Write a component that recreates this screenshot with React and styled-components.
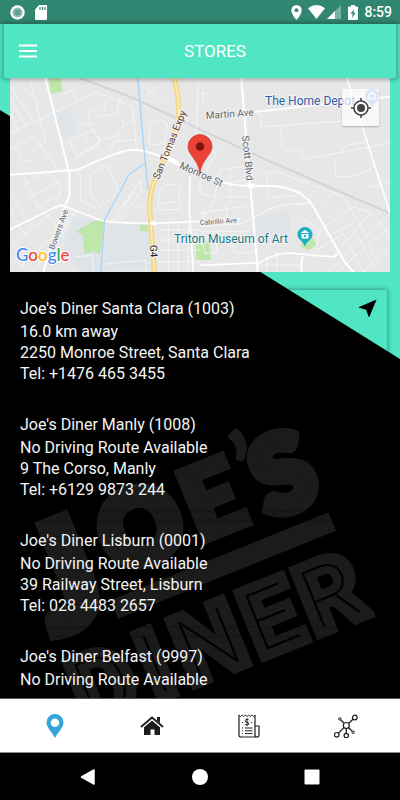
import React from 'react';
import styled, { createGlobalStyle } from 'styled-components';

const stores = [
  {
    name: "Joe's Diner Santa Clara (1003)",
    lines: ['16.0 km away', '2250 Monroe Street, Santa Clara', 'Tel: +1476 465 3455'],
    hasRoute: true,
  },
  {
    name: "Joe's Diner Manly (1008)",
    lines: ['No Driving Route Available', '9 The Corso, Manly', 'Tel: +6129 9873 244'],
  },
  {
    name: "Joe's Diner Lisburn (0001)",
    lines: ['No Driving Route Available', '39 Railway Street, Lisburn', 'Tel: 028 4483 2657'],
  },
  {
    name: "Joe's Diner Belfast (9997)",
    lines: ['No Driving Route Available'],
  },
];

export default function App() {
  return (
    <>
      <GlobalStyle />
      <PageSC>
        <Backdrop />
        <StatusBar />
        <HeaderSC>
          <MenuButtonSC type="button" aria-label="Menu">
            <svg width="20" height="14" viewBox="0 0 20 14">
              <path d="M1 1.500h18M1 7h18M1 12.500h18" stroke="#fff" strokeWidth="2" />
            </svg>
          </MenuButtonSC>
          <TitleSC>STORES</TitleSC>
        </HeaderSC>
        <MapSC>
          <StreetMap />
          <LocateButtonSC type="button" aria-label="My location">
            <svg width="22" height="22" viewBox="0 0 22 22">
              <circle cx="11" cy="11" r="7" fill="none" stroke="#444" strokeWidth="1.6" />
              <circle cx="11" cy="11" r="4" fill="#444" />
              <path d="M11 1v3M11 18v3M1 11h3M18 11h3" stroke="#444" strokeWidth="1.6" />
            </svg>
          </LocateButtonSC>
        </MapSC>
        <StoreListSC>
          {stores.map((store) => (
            <StoreCardSC key={store.name}>
              <div>
                <StoreNameSC>{store.name}</StoreNameSC>
                {store.lines.map((line) => (
                  <StoreLineSC key={line}>{line}</StoreLineSC>
                ))}
              </div>
              {store.hasRoute && (
                <RouteButtonSC type="button" aria-label="Directions">
                  <svg width="18" height="18" viewBox="0 0 18 18">
                    <path d="M17.600 .4L0 8v.7l7.200 2.100L9.600 17.800h.8z" fill="#000" />
                  </svg>
                </RouteButtonSC>
              )}
            </StoreCardSC>
          ))}
        </StoreListSC>
        <TabBar />
        <SystemNav />
      </PageSC>
    </>
  );
}

const dinerLetters = [
  { letter: 'D', x: 30 },
  { letter: 'I', x: 86 },
  { letter: 'N', x: 144 },
  { letter: 'E', x: 211 },
  { letter: 'R', x: 275 },
];

function Backdrop() {
  return (
    <BackdropSC viewBox="0 0 400 800" preserveAspectRatio="xMidYMin slice" aria-hidden="true">
      <path d="M0 0H400V359L0 110z" fill="#50e5c3" />
      <g fill="#1b1b1b" stroke="#1b1b1b" textAnchor="middle">
        <g transform="translate(118 608) rotate(-22)" fontFamily="Lato, sans-serif" fontWeight="900">
          <text x="-38" y="1" fontSize="144" strokeWidth="14">J</text>
          <text x="51" y="-31" fontSize="100" strokeWidth="12">O</text>
          <text x="128" y="-30" fontSize="100" strokeWidth="8">E</text>
          <text x="173" y="-45" fontSize="100" strokeWidth="1">’</text>
          <text x="203" y="-26" fontSize="104" strokeWidth="12">S</text>
          <rect x="-4" y="-10" width="235" height="20" stroke="none" />
        </g>
        <g transform="translate(90 733) rotate(-22)" fontFamily="Roboto, sans-serif">
          {dinerLetters.map(({ letter, x }) => (
            <text key={letter} x={x} y="-5" fontSize="98" fontWeight="700" strokeWidth="9">
              {letter}
            </text>
          ))}
          <g fill="#000" stroke="#000" strokeWidth="0">
            {dinerLetters.map(({ letter, x }) => (
              <text key={letter} x={x} y="-11" fontSize="82" fontWeight="100">
                {letter}
              </text>
            ))}
          </g>
        </g>
      </g>
    </BackdropSC>
  );
}

function StatusBar() {
  return (
    <StatusBarSC>
      <StatusGroupSC>
        <svg width="15" height="15" viewBox="0 0 15 15">
          <circle cx="7.500" cy="7.500" r="7.200" fill="#fff" />
          <circle cx="7.500" cy="7.500" r="5" fill="#8fbcb0" />
          <circle cx="7.500" cy="7.500" r="3" fill="#5f9f8f" />
        </svg>
        <svg width="12" height="15" viewBox="0 0 12 15">
          <path d="M4.200 0H11q1 0 1 1v13q0 1-1 1H1q-1 0-1-1V4.500z" fill="#fff" />
          <path d="M5 2v3M7.500 2v3M10 2v3" stroke="#318671" strokeWidth="1.2" />
        </svg>
      </StatusGroupSC>
      <StatusGroupSC $tight>
        <svg width="11" height="15" viewBox="0 0 11 15">
          <path d="M5.500 0A5.200 5.200 0 0 0 .3 5.200C.3 9.200 5.500 15 5.500 15s5.200-5.800 5.200-9.800A5.200 5.200 0 0 0 5.500 0z" fill="#fff" />
          <circle cx="5.500" cy="5.200" r="1.900" fill="#318671" />
        </svg>
        <svg width="34" height="14" viewBox="0 0 34 14">
          <path d="M0 3.200Q8.500-3 17 3.200L8.500 14z" fill="#fff" />
          <path d="M33 0V14H19z" fill="#79b0a2" />
          <path d="M27 6V14H19z" fill="#fff" />
        </svg>
        <svg width="10" height="15" viewBox="0 0 10 15">
          <path d="M3 0h4v1.500h2q1 0 1 1V14q0 1-1 1H1q-1 0-1-1V2.500q0-1 1-1h2z" fill="#fff" />
          <path d="M6.200 4L2.500 8.800h2.200L4 13l3.600-5.200H5.400z" fill="#318671" />
        </svg>
        <ClockSC>8:59</ClockSC>
      </StatusGroupSC>
    </StatusBarSC>
  );
}

function StreetMap() {
  return (
    <MapDrawingSC viewBox="10 8 380 194" preserveAspectRatio="xMidYMid slice">
      <rect x="10" y="8" width="380" height="194" fill="#e7e7e7" />
      <g transform="scale(.33333)" fill="none" strokeLinejoin="round" strokeLinecap="round">
        <g fill="#dfe4e8">
          <path d="M165 130l50-14 8 74-36 16z" />
          <path d="M218 440l96 10-6 156h-68l-52-60z" />
          <path d="M322 460l122 10 14 130H300z" />
          <path d="M764 440l106-16v76l-100 14z" />
        </g>
        <g fill="#bfe7aa">
          <path d="M146 24h34l8 40-36 8z" />
          <path d="M228 484l50-30 36-4-14 104-20-10-26 8-6-56z" />
          <path d="M418 464l26 2v20l-24-4z" />
          <path d="M588 524l40-8 6 54h-46z" />
          <path d="M908 505l28-5 14 24-22 16-26-8z" />
        </g>
        <path d="M240 24L400 84L600 178L800 270L1170 430" stroke="#d2d5d8" strokeWidth="6" />
        <g stroke="#f7f7f7" strokeWidth="2.500">
          <path d="M30 50L100 155M30 88L80 170M30 130L56 184M60 40L130 110M90 24L138 216L84 248M30 190L290 67L398 110L410 245M180 80L214 60L232 96M30 240L98 200L130 240L176 300M48 230L66 276L100 272" />
          <path d="M186 222L280 178L300 214L232 264L210 214M250 190L272 236M228 256L290 230M270 115l30 25l50-10l22 30l-20 40l-50 10l-34-40zM285 100l20 30M320 90l-8 35M350 125l10-40M375 160l25-5M350 195l8 20M300 210l-10 22M250 160l30 5" />
          <path d="M272 312L320 282L358 366L300 412L272 370zM240 300L242 390L296 420M330 460L420 334L424 366L356 456M350 450L410 345M365 400l20 12M400 370l20 10M398 408l25 4" />
          <path d="M66 350L124 308M84 382L180 334M106 412L176 380M66 306L110 400L180 480M140 302L180 345L178 380M30 370L98 468M30 420L80 500M30 530L180 408M60 590L180 480M100 606L220 430M184 500L225 425M30 560l60 46M330 240L345 215L408 210M320 582L438 570V606M228 560L276 556L282 606" />
          <path d="M440 80L450 60L490 40M430 50l30 20M470 90l20 10M450 160q40-20 52 0l-6 60l-46 4zM480 360q4-20 60-18M480 360l-6 60l66-2M538 350v70M480 400l50-4M480 480H600M480 510H600M480 540H600M476 575H600M505 450V606M535 455V606M565 455V606M596 24L588 200L650 250" />
          <path d="M600 70h30M610 50v50M780 130L784 170L1140 146M840 170L848 230L860 242H904L908 268L1170 220M1002 264L1008 318Q1070 330 1120 290M1028 250q-4-30 80-34M800 304L804 384L886 376M1100 355L1170 334M780 310L830 305L1030 380L1110 520L1130 580M740 340L820 350L904 365M940 360Q930 400 900 410M990 375l-14 26" />
          <path d="M600 484H740M606 520l10 30L650 546V500M700 500v48h60M770 560V606M800 555V606M830 550V606M770 585H900M960 480L940 560M990 600L1170 430M960 480L1060 410L1120 430L1170 500M1010 606L1170 470M1090 606L1170 530M980 500L1060 460M1000 560L1110 430M1030 490L1090 606M1060 470L1120 590M950 540L1030 490M900 440l60 40" />
          <path d="M600 430L660 420L736 410M600 460L640 400L660 300L730 290M670 340L740 330M660 380h80M690 290v110M620 300l40-70M600 330v40l40 10M610 410v40M680 400v50M600 470L720 462" />
          <path d="M720 462Q770 440 804 420T930 400" strokeWidth="4" />
        </g>
        <g stroke="#fff" strokeWidth="6">
          <path d="M136 24L208 310V378L194 412L155 520L130 606M30 314L230 300Q300 268 350 250T440 245Q490 260 520 276L600 316Q690 350 750 348H830Q910 360 940 410L1030 570L1060 606" />
          <path d="M30 478L182 404L300 450Q340 460 460 460L600 454Q680 452 720 446M570 320L568 420L580 606M600 586L780 578Q830 545 880 550T1000 560L1020 548M1040 24L1170 430" strokeWidth="5" />
          <path d="M724 24L750 340L774 606M760 126L1170 80M908 560Q900 590 906 606" />
        </g>
        <path d="M413 24L436 280L388 312L314 450L302 606M436 280L444 360" stroke="#a5d5fa" strokeWidth="4" />
        <path d="M523 24Q545 120 530 180L470 320Q442 370 452 450L463 606" stroke="#f3d98c" strokeWidth="16" strokeLinecap="butt" />
        <path d="M523 24Q545 120 530 180L470 320Q442 370 452 450L463 606" stroke="#fbeebb" strokeWidth="4" strokeLinecap="butt" />
        <path d="M505 266l26 12M456 460h8M746 348h12" stroke="#fff" strokeWidth="12" />
      </g>
      <g fontFamily="Roboto, sans-serif" stroke="#f3f3f3" strokeWidth="2" paintOrder="stroke" fill="#5c666e">
        <text x="206" y="49" fontSize="10" transform="rotate(-4 206 49)">Martin Ave</text>
        <text x="242" y="66" fontSize="10" transform="rotate(84 242 66)">Scott Blvd</text>
        <text x="179" y="98" fontSize="10" transform="rotate(24 179 98)">Monroe St</text>
        <text x="200" y="155" fontSize="7" transform="rotate(-4 200 155)">Cabrillo Ave</text>
        <text x="54" y="180" fontSize="8" transform="rotate(-70 54 180)">Bowers Ave</text>
        <text x="159" y="110" fontSize="10" fill="#5a3a22" transform="rotate(-68 159 110)">San Tomas Expy</text>
        <text x="150" y="175" fontSize="10" fill="#222" transform="rotate(88 150 175)">G4</text>
        <text x="265" y="35" fontSize="12" fill="#2d5fa8">The Home Depot</text>
        <text x="174" y="173" fontSize="12" fill="#147a86">Triton Museum of Art</text>
      </g>
      <path d="M372 19a7 7 0 0 0-7 7c0 5 5 6 7 12c2-6 7-7 7-12a7 7 0 0 0-7-7z" fill="#7fa9ee" />
      <path d="M369 24h6v5h-6zM370 24q2-5 4 0" fill="none" stroke="#fff" strokeWidth="1.2" />
      <path d="M305 157a7.500 7.500 0 0 0-7.500 7.500c0 5 5.500 6 7.500 12c2-6 7.500-7 7.500-12a7.500 7.500 0 0 0-7.500-7.500z" fill="#1faebf" />
      <path d="M300.500 163l4.500-3l4.500 3zM301.500 164h7v4.500h-7z" fill="#fff" />
      <path d="M304 165h2v2h-2z" fill="#1faebf" />
      <path d="M200 64.500a12 12 0 0 0-12 12c0 9 10 12 12 27c2-15 12-18 12-27a12 12 0 0 0-12-12z" fill="#ea4335" stroke="#c5322a" strokeWidth=".6" />
      <circle cx="200" cy="76.500" r="4.200" fill="#811411" />
      <text x="16" y="191" fontFamily="Lato, sans-serif" fontSize="17" fontWeight="500" stroke="#fff" strokeWidth="2" paintOrder="stroke">
        <tspan fill="#4285f4">G</tspan>
        <tspan fill="#ea4335">o</tspan>
        <tspan fill="#fbbc05">o</tspan>
        <tspan fill="#4285f4">g</tspan>
        <tspan fill="#34a853">l</tspan>
        <tspan fill="#ea4335">e</tspan>
      </text>
    </MapDrawingSC>
  );
}

function TabBar() {
  return (
    <TabBarSC>
      <TabSC href="#stores" aria-label="Stores">
        <svg width="24" height="24" viewBox="0 0 24 24">
          <path fillRule="evenodd" d="M12 0a8.500 8.500 0 0 0-8.500 8.500C3.500 14 9.500 18.500 12 24c2.500-5.500 8.500-10 8.500-15.500A8.500 8.500 0 0 0 12 0zm0 4.400a4.300 4.300 0 1 1 0 8.600a4.300 4.300 0 0 1 0-8.600z" fill="#34a5dc" />
        </svg>
      </TabSC>
      <TabSC href="#home" aria-label="Home">
        <svg width="24" height="24" viewBox="0 0 24 24">
          <path d="M12 6.500l8 6.800V21h-5.500v-5.500h-4V21H4v-7.700z" fill="#1d1d1d" />
          <path d="M1.500 12.500L12 3.500l10.500 9" fill="none" stroke="#fff" strokeWidth="4" />
          <path d="M1.500 12.500L12 3.500l10.500 9" fill="none" stroke="#1d1d1d" strokeWidth="1.800" strokeLinecap="round" />
          <path d="M17 3h3v6l-3-2.500z" fill="#1d1d1d" />
        </svg>
      </TabSC>
      <TabSC href="#orders" aria-label="Orders">
        <svg width="24" height="24" viewBox="0 0 24 24" fill="none" stroke="#1d1d1d">
          <path d="M2 1v20q0 2 2 2h16q2 0 2-2v-9h-4M18 1v20q0 2 2 2" strokeWidth="1.200" />
          <path d="M2 1l1.600 1.500L5.200 1l1.600 1.500L8.400 1L10 2.500L11.600 1l1.600 1.500L14.800 1l1.600 1.500L18 1" strokeWidth="1" />
          <path d="M12 6.300q-.4-1-2-1t-1.800 1.300t1.800 1.600t1.800 1.600t-1.800 1.300t-2-1M10 4.300v7.500" strokeWidth="1" />
          <path d="M5 8.500h1.200M14 8.500h1.200M5 14h1M5 16.800h1M5 19.600h1M8 14h7.500M8 16.800h7.500M8 19.600h7.500" strokeWidth="1" />
        </svg>
      </TabSC>
      <TabSC href="#network" aria-label="Network">
        <svg width="24" height="24" viewBox="0 0 24 24" fill="none" stroke="#1d1d1d">
          <circle cx="12.300" cy="11.500" r="3" strokeWidth="1.200" />
          <circle cx="20.800" cy="3.500" r="2.300" strokeWidth="1.200" />
          <circle cx="2.700" cy="20.800" r="2.300" strokeWidth="1.200" />
          <circle cx="12.300" cy="21.500" r="2.200" strokeWidth="1.200" />
          <circle cx="5.800" cy="4.800" r="1.200" />
          <circle cx="19.200" cy="18.300" r="1.200" />
          <path d="M6.700 5.800l3.300 3.400M14.500 9.400l4.500-4.200M10 13.600l-5.500 5.500M12.300 14.600v4.600M14.600 13.700l3.700 3.700" strokeWidth="1.300" />
        </svg>
      </TabSC>
    </TabBarSC>
  );
}

function SystemNav() {
  return (
    <SystemNavSC>
      <SystemButtonSC type="button" aria-label="Back">
        <svg width="16" height="16" viewBox="0 0 16 16">
          <path d="M14 1v14L1.500 8z" fill="#fff" stroke="#fff" strokeWidth="1.500" strokeLinejoin="round" />
        </svg>
      </SystemButtonSC>
      <SystemButtonSC type="button" aria-label="Home screen">
        <svg width="16" height="16" viewBox="0 0 16 16">
          <circle cx="8" cy="8" r="8" fill="#fff" />
        </svg>
      </SystemButtonSC>
      <SystemButtonSC type="button" aria-label="Recent apps">
        <svg width="16" height="16" viewBox="0 0 16 16">
          <rect x=".5" y=".5" width="15" height="15" rx="1" fill="#fff" />
        </svg>
      </SystemButtonSC>
    </SystemNavSC>
  );
}

const GlobalStyle = createGlobalStyle`
  * {
    box-sizing: border-box;
  }
  body {
    margin: 0;
    background: #000;
    font-family: Roboto, sans-serif;
  }
  svg {
    display: block;
  }
  button {
    border: none;
    background: none;
    padding: 0;
    font: inherit;
    color: inherit;
    cursor: pointer;
  }
`;

const PageSC = styled('div')`
  position: relative;
  display: flex;
  flex-direction: column;
  height: 100vh;
  overflow: hidden;
  background: #000;
`;

const BackdropSC = styled('svg')`
  position: absolute;
  top: 0;
  left: 0;
  width: 100%;
  height: 100%;
`;

const StatusBarSC = styled('div')`
  position: relative;
  display: flex;
  justify-content: space-between;
  align-items: center;
  flex: none;
  height: 24px;
  padding: 0 8px 0 10px;
  background: #318671;
`;

const StatusGroupSC = styled('div')`
  display: flex;
  align-items: center;
  gap: ${(props) => (props.$tight ? 6 : 10)}px;
`;

const ClockSC = styled('span')`
  font-size: 14px;
  line-height: 24px;
  font-weight: 500;
  color: #fff;
`;

const HeaderSC = styled('header')`
  position: relative;
  z-index: 1;
  display: grid;
  grid-template-columns: 48px 1fr 48px;
  align-items: center;
  flex: none;
  height: 54px;
  margin: 0 4px;
  background: #50e5c3;
  box-shadow: 0 0 4px 2px rgba(0, 0, 0, 0.25);
`;

const MenuButtonSC = styled('button')`
  display: flex;
  justify-content: center;
  align-items: center;
  height: 48px;
`;

const TitleSC = styled('h1')`
  grid-column: 2;
  margin: 0;
  padding-left: 30px;
  text-align: center;
  font-size: 17px;
  line-height: 24px;
  font-weight: 400;
  color: #fff;
`;

const MapSC = styled('section')`
  position: relative;
  flex: none;
  height: 194px;
  margin: 0 10px;
`;

const MapDrawingSC = styled('svg')`
  width: 100%;
  height: 100%;
`;

const LocateButtonSC = styled('button')`
  position: absolute;
  top: 11px;
  right: 11px;
  display: flex;
  justify-content: center;
  align-items: center;
  width: 37px;
  height: 37px;
  border-radius: 2px;
  background: rgba(255, 255, 255, 0.7);
  box-shadow: 0 1px 2px rgba(0, 0, 0, 0.25);
`;

const StoreListSC = styled('main')`
  position: relative;
  flex: 1;
  min-height: 0;
  display: flex;
  flex-direction: column;
  gap: 12px;
  padding: 18px 13px 0 10px;
  overflow: hidden;
`;

const StoreCardSC = styled('article')`
  display: flex;
  justify-content: space-between;
  align-items: flex-start;
  flex: none;
  padding: 8px 10px 10px;
  border-radius: 2px;
  box-shadow: 0 0 4px 1px rgba(0, 0, 0, 0.3);
  color: #f5f5f5;
  font-size: 16px;
  line-height: 21px;
`;

const StoreNameSC = styled('h2')`
  margin: 0 0 2px;
  font-size: 16px;
  line-height: 21px;
  font-weight: 400;
`;

const StoreLineSC = styled('p')`
  margin: 0;
`;

const RouteButtonSC = styled('button')`
  padding-top: 1px;
`;

const TabBarSC = styled('nav')`
  position: relative;
  display: flex;
  flex: none;
  height: 55px;
  padding: 0 6px;
  background: #fff;
  border-top: 1px solid #555;
  border-bottom: 1px solid #888;
`;

const TabSC = styled('a')`
  flex: 1;
  display: flex;
  justify-content: center;
  align-items: center;
`;

const SystemNavSC = styled('div')`
  position: relative;
  display: flex;
  justify-content: center;
  flex: none;
  height: 47px;
  background: #000;
`;

const SystemButtonSC = styled('button')`
  flex: 0 1 28%;
  display: flex;
  justify-content: center;
  align-items: center;
`;
